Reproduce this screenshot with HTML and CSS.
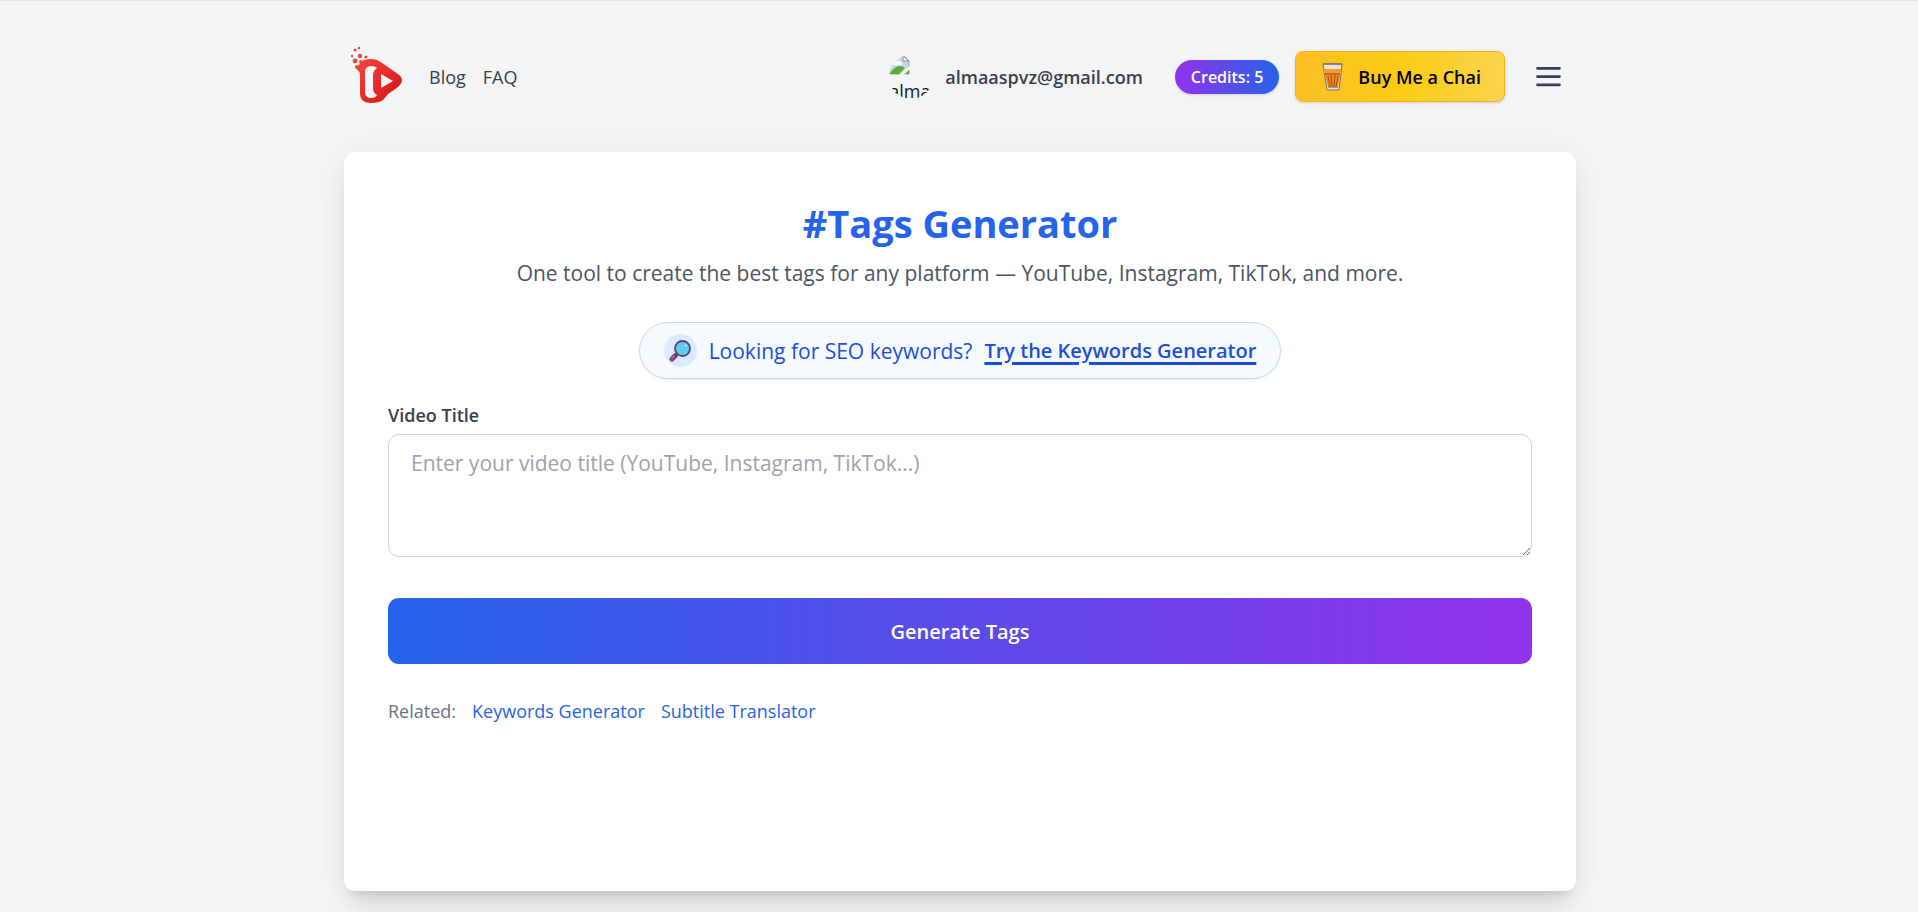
FILE: index.html
```html
<!DOCTYPE html>
<html lang="en">
  <head>
    <meta charset="utf-8">
    <meta name="viewport" content="width=device-width, initial-scale=1">
    <title>#Tags Generator</title>
    <link rel="stylesheet" href="styles.css">
  </head>
  <body>
    <header class="header">
      <nav class="nav">
        <a class="logo" href="#" aria-label="Home">
          <svg width="54" height="58" viewBox="0 0 54 58">
            <defs>
              <linearGradient id="red" x1="0" y1="0" x2="1" y2="1">
                <stop offset="0" stop-color="#fb463b"/>
                <stop offset="1" stop-color="#d31118"/>
              </linearGradient>
            </defs>
            <path fill="url(#red)" fill-rule="evenodd" d="M7 21 Q9 19 11 16 Q14 13 21 13 Q27 13 32 17 L48 28 Q56 34 48 41 L38 48 L33 54 Q29 57 21 57 Q10 57 10 47 V29 Q10 25 7 24 Z M21 20 Q15 20 15 26 V46 Q15 52 21 52 Q26 52 27 49 Q23 47 23 42 V29 Q23 25 27 22 Q25 20 21 20 Z M31 28 V42 L43 35 Z"/>
            <g fill="#f4463b">
              <circle cx="5" cy="15" r="2.4"/>
              <circle cx="10" cy="10" r="2.2"/>
              <circle cx="16" cy="11" r="1.6"/>
              <circle cx="2" cy="10" r="1.2"/>
              <circle cx="5" cy="4" r="1.5"/>
              <circle cx="9" cy="2" r="1.3"/>
              <circle cx="7" cy="21" r="2"/>
              <circle cx="11" cy="16" r="2"/>
            </g>
          </svg>
        </a>
        <a href="#">Blog</a>
        <a href="#">FAQ</a>
      </nav>
      <div class="account">
        <div class="user">
          <span class="avatar">
            <svg width="22" height="20" viewBox="0 0 22 20">
              <path fill="#c6d6f5" stroke="#a5a5a5" d="M1 1 H15 L20 6 V19 H1 Z"/>
              <path fill="#fff" d="M4 10 Q4 7 7 7 Q9 4 12 7 Q14 8 13 10 Z"/>
              <path fill="#56ac35" d="M1 19 Q5 11 11 11 Q14 11 16 13 L10 19 Z"/>
              <path fill="#fff" stroke="#8d8d8d" d="M14 1 V6 H20 Z"/>
              <path stroke="#f3f4f6" stroke-width="3" d="M12 20 L21 12"/>
              <path fill="#56ac35" d="M16 19 L20 15 V19 Z"/>
            </svg>
            <span>alma</span>
          </span>
          <span class="email">almaaspvz@gmail.com</span>
        </div>
        <span class="credits">Credits: 5</span>
        <a class="chai" href="#">
          <svg width="22" height="28" viewBox="0 0 22 28">
            <path fill="#e9e4d8" stroke="#77736b" d="M1 1 H20 L17 27 H5 Z"/>
            <path fill="#ef8a1d" d="M2 7 H19 L16 24 H6 Z"/>
            <path fill="#f99b35" d="M2 6 H19 V10 H2 Z"/>
            <path fill="none" stroke="#a95510" d="M6 13 L8 23 M9 12 L10 23 M13 12 L12 23 M16 13 L14 23"/>
            <path fill="none" stroke="#8a5a2b" d="M3 11 H18 M6 24 H16"/>
            <path stroke="#5f6062" d="M1 1 H20"/>
          </svg>
          Buy Me a Chai
        </a>
        <button class="menu" type="button" aria-label="Menu">
          <svg width="33" height="33" viewBox="0 0 24 24" fill="none" stroke="currentColor" stroke-width="2" stroke-linecap="round">
            <path d="M4 6h16M4 12h16M4 18h16"/>
          </svg>
        </button>
      </div>
    </header>
    <main class="card">
      <h1>#Tags Generator</h1>
      <p class="subtitle">One tool to create the best tags for any platform — YouTube, Instagram, TikTok, and more.</p>
      <div class="promo">
        <span class="promo-icon">
          <svg width="22" height="22" viewBox="0 0 22 22">
            <path stroke="#7a417a" stroke-width="5" stroke-linecap="round" d="M3 19 L6 16"/>
            <path stroke="#a05f9b" stroke-width="2" stroke-linecap="round" d="M3 18 L6 15"/>
            <path stroke="#653669" stroke-width="3" d="M6 16 L9 13"/>
            <circle cx="13.5" cy="8.5" r="7.5" fill="#60cdea" stroke="#594473" stroke-width="1.8"/>
            <circle cx="16.5" cy="5.5" r="1" fill="#b9edfa"/>
          </svg>
        </span>
        <span>Looking for SEO keywords?</span>
        <a href="#">Try the Keywords Generator</a>
      </div>
      <form>
        <label for="title">Video Title</label>
        <textarea id="title" placeholder="Enter your video title (YouTube, Instagram, TikTok...)"></textarea>
        <button class="generate" type="button">Generate Tags</button>
      </form>
      <div class="related">
        <span>Related:</span>
        <a href="#">Keywords Generator</a>
        <a href="#">Subtitle Translator</a>
      </div>
    </main>
  </body>
</html>
```
FILE: styles.css
```css
* {
  box-sizing: border-box;
}
body {
  margin: 0;
  min-height: 100vh;
  display: flex;
  flex-direction: column;
  align-items: center;
  padding: 0 14px 21px 16px;
  border-top: 1px solid #f8dcd3;
  background: #f3f4f6;
  color: #374151;
  font-family: "Segoe UI", "Open Sans", "Noto Sans", sans-serif;
  font-size: 18px;
  line-height: 26px;
}
a {
  color: inherit;
  text-decoration: none;
}
svg {
  display: block;
  flex: none;
}
.header {
  width: 100%;
  max-width: 1232px;
  height: 151px;
  display: flex;
  align-items: center;
  justify-content: space-between;
}
.nav, .account, .user {
  display: flex;
  align-items: center;
}
.nav {
  gap: 17px;
  padding-left: 6px;
}
.logo {
  margin: 0 8px 4px 0;
}
.account {
  gap: 16px;
}
.user {
  gap: 12px;
  margin-right: 16px;
}
.avatar {
  width: 44px;
  height: 44px;
  border-radius: 50%;
  overflow: hidden;
  color: #111827;
  line-height: 32px;
}
.email {
  font-weight: 600;
}
.credits {
  padding: 4px 16px;
  border-radius: 17px;
  background: linear-gradient(to right, #9333ea, #2563eb);
  box-shadow: 0 1px 3px rgba(0, 0, 0, 0.15);
  color: #fff;
  font-size: 16px;
  font-weight: 600;
}
.chai {
  display: flex;
  align-items: center;
  gap: 14px;
  height: 51px;
  padding: 0 23px 0 26px;
  border: 1px solid #fbad1e;
  border-radius: 8px;
  background: linear-gradient(to right, #fbbf24, #facc15, #fcd34d);
  box-shadow: 0 1px 3px rgba(0, 0, 0, 0.15);
  color: #000;
  font-weight: 600;
}
.menu {
  padding: 11px;
  border: 0;
  background: none;
  color: #374151;
}
.card {
  flex: 1;
  width: 100%;
  max-width: 1232px;
  padding: 44px;
  border-radius: 11px;
  background: #fff;
  box-shadow: 0 22px 28px -6px rgba(0, 0, 0, 0.1), 0 9px 11px -7px rgba(0, 0, 0, 0.1), 0 0 28px rgba(0, 0, 0, 0.05);
}
h1 {
  margin: 5px 0 10px;
  color: #2563eb;
  font-size: 38px;
  line-height: 44px;
  text-align: center;
}
.subtitle {
  margin: 0 0 31px;
  color: #4b5563;
  font-size: 21px;
  line-height: 36px;
  text-align: center;
}
.promo {
  display: flex;
  align-items: center;
  gap: 12px;
  width: fit-content;
  height: 57px;
  margin: 0 auto 23px;
  padding: 0 24px;
  border: 1px solid #bfdbfe;
  border-radius: 29px;
  background: #f5faff;
  box-shadow: 0 1px 2px rgba(0, 0, 0, 0.06);
  color: #1d4ed8;
  font-size: 21px;
}
.promo a {
  font-size: 20px;
  font-weight: 600;
  text-decoration: underline 3px;
  text-underline-offset: 4px;
}
.promo-icon {
  display: grid;
  place-items: center;
  width: 33px;
  height: 33px;
  border-radius: 50%;
  background: #dbeafe;
}
form {
  display: flex;
  flex-direction: column;
}
label {
  margin-bottom: 6px;
  font-weight: 600;
}
textarea {
  height: 123px;
  margin-bottom: 41px;
  padding: 12px 22px;
  border: 1px solid #d1d5db;
  border-radius: 11px;
  background: #fff;
  font-family: inherit;
  font-size: 21px;
  line-height: 33px;
  resize: vertical;
}
textarea::placeholder {
  color: #9ca3af;
}
.generate {
  height: 66px;
  margin-bottom: 34px;
  border: 0;
  border-radius: 11px;
  background: linear-gradient(to right, #2563eb, #9333ea);
  color: #fff;
  font-family: inherit;
  font-size: 20px;
  font-weight: 600;
}
.related {
  display: flex;
  gap: 16px;
  color: #6b7280;
}
.related a {
  color: #2563eb;
}
```
